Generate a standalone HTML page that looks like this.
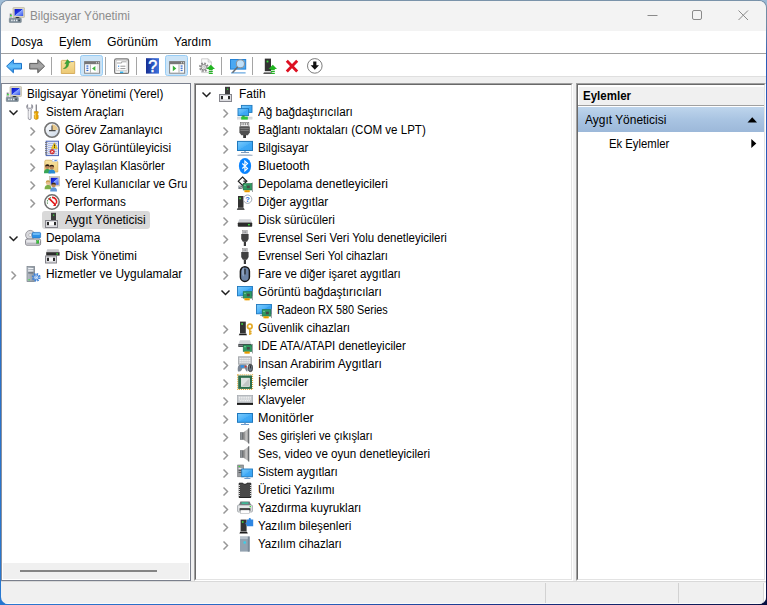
<!DOCTYPE html><html lang="tr"><head><meta charset="utf-8"><title>Bilgisayar Yönetimi</title><style>
html,body{margin:0;padding:0;}
body{width:767px;height:605px;overflow:hidden;position:relative;font-family:"Liberation Sans",sans-serif;font-size:12px;color:#000;background:#2a64c0;}
.cn{position:absolute;width:12px;height:12px;}
#frame{position:absolute;left:0;top:0;width:767px;height:605px;border-radius:8px;
 background:
  linear-gradient(180deg,#7a90a8 0px,#7d93ad 30px,#7a90ac 230px,#2a70c8 320px,#2878d0 605px) left top/9px 100% no-repeat,
  linear-gradient(180deg,#758ea6 0px,#6f8aa5 24px,#2a5cb8 60px,#2858b8 260px,#0a1850 520px,#060e40 605px) right top/9px 100% no-repeat,
  linear-gradient(90deg,#7a93aa,#7a93aa) left top/100% 9px no-repeat,
  linear-gradient(90deg,#2a78d0 0%,#2a64c0 40%,#1a3488 65%,#0a1248 100%) left bottom/100% 9px no-repeat;}
#win{position:absolute;left:1px;top:1px;width:765px;height:603px;background:#f0f0f0;border-radius:7px;overflow:hidden;}
#win>*{position:absolute;}
#title{left:0;top:0;width:765px;height:30px;background:#f3f3f3;}
#menu{left:0;top:30px;width:765px;height:22px;background:#fff;}
#msep{left:0;top:52px;width:765px;height:1px;background:#a0a0a0;}
#tool{left:0;top:53px;width:765px;height:22px;background:#fff;}
#tsep{left:0;top:75px;width:765px;height:1px;background:#dfdfdf;}
.pane{background:#fff;box-sizing:border-box;}
.tx{position:absolute;white-space:nowrap;line-height:18px;height:18px;transform-origin:0 50%;}
.ic{position:absolute;width:16px;height:16px;overflow:visible;}
.abs{position:absolute;}
</style></head><body>
<svg width="0" height="0" style="position:absolute"><defs>
<linearGradient id="gScr" x1="0" y1="0" x2="1" y2="1"><stop offset="0" stop-color="#0a10c8"/><stop offset=".45" stop-color="#2038e0"/><stop offset=".5" stop-color="#8fa8ff"/><stop offset="1" stop-color="#3050e8"/></linearGradient>
<linearGradient id="gBlue" x1="0" y1="0" x2="1" y2="1"><stop offset="0" stop-color="#7ccbfd"/><stop offset=".5" stop-color="#4db2f8"/><stop offset=".52" stop-color="#3fa9f6"/><stop offset="1" stop-color="#36a3f4"/></linearGradient>
<linearGradient id="gSpk" x1="0" y1="0" x2="1" y2="0"><stop offset="0" stop-color="#6e6e6e"/><stop offset=".5" stop-color="#c8c8c8"/><stop offset="1" stop-color="#8a8a8a"/></linearGradient>
<linearGradient id="gBack" x1="0" y1="0" x2="0" y2="1"><stop offset="0" stop-color="#2b8fe6"/><stop offset=".5" stop-color="#69c2fb"/><stop offset="1" stop-color="#1f86e2"/></linearGradient>
<linearGradient id="gFwd" x1="0" y1="0" x2="0" y2="1"><stop offset="0" stop-color="#8c8c8c"/><stop offset=".5" stop-color="#a8a8a8"/><stop offset="1" stop-color="#7e7e7e"/></linearGradient>
<linearGradient id="gHelp" x1="0" y1="0" x2="1" y2="0"><stop offset="0" stop-color="#162f92"/><stop offset=".55" stop-color="#2a55c4"/><stop offset="1" stop-color="#3f74dc"/></linearGradient>
<linearGradient id="gFold" x1="0" y1="0" x2="0" y2="1"><stop offset="0" stop-color="#f7e3a1"/><stop offset="1" stop-color="#ecc873"/></linearGradient>
<linearGradient id="gClock" x1="0" y1="0" x2="1" y2="1"><stop offset="0" stop-color="#ffffff"/><stop offset="1" stop-color="#c9d6e6"/></linearGradient>
<linearGradient id="gTower" x1="0" y1="0" x2="1" y2="0"><stop offset="0" stop-color="#b9c0c8"/><stop offset="1" stop-color="#8a949e"/></linearGradient>
</defs></svg>
<div class="cn" style="left:0;top:0;background:#9fbcd6"></div><div class="cn" style="right:0;top:0;background:#9bbad6"></div><div class="cn" style="left:0;bottom:0;background:#2677d0"></div><div class="cn" style="right:0;bottom:0;background:#060e40"></div>
<div id="frame"></div>
<div id="win">
<div id="title"></div>
<svg class="ic" style="left:8px;top:6px" viewBox="0 0 16 16"><rect x="4" y="0.5" width="11.5" height="10" rx="0.8" fill="#d9d5c1" stroke="#b5b09a" stroke-width=".6"/><rect x="5.6" y="2" width="8.6" height="7" fill="url(#gScr)"/><path d="M6 11.2c1-1.6 4-1.6 5 0z" fill="#222"/><rect x="0.3" y="6.5" width="2.6" height="4.6" fill="#c9c9cf"/><rect x="1" y="8" width="1.8" height="1.3" fill="#3fe03f"/><rect x="1.3" y="6.8" width="1" height="1" fill="#444"/><rect x="0.3" y="11.2" width="12" height="4.3" rx="0.6" fill="#7d8d99" stroke="#66757f" stroke-width=".5"/><rect x="2.2" y="12.6" width="1.4" height="1.6" fill="#e8ecef"/><rect x="4.6" y="12.6" width="1.4" height="1.6" fill="#e8ecef"/><rect x="7" y="12.6" width="1.4" height="1.6" fill="#e8ecef"/><rect x="9.4" y="12.6" width="1.4" height="1.6" fill="#39434b"/></svg>
<span class="tx" style="left:29.35px;top:6px;transform:scaleX(0.9811);color:#8c8c8c;">Bilgisayar Yönetimi</span>
<svg class="abs" style="left:0;top:0" width="765" height="30" viewBox="1 1 765 30" fill="none" stroke="#8a8a8a" stroke-width="1"><path d="M647.5 15.5h10"/><rect x="692.5" y="10.500" width="9" height="9" rx="1.500"/><path d="M738.500 10.500l9.500 9.500M748 10.500l-9.500 9.500"/></svg>
<div id="menu"></div>
<span class="tx" style="left:10.25px;top:32px;transform:scaleX(0.9319);">Dosya</span>
<span class="tx" style="left:58.05px;top:32px;transform:scaleX(0.9627);">Eylem</span>
<span class="tx" style="left:105.95px;top:32px;transform:scaleX(1.0174);">Görünüm</span>
<span class="tx" style="left:172.65px;top:32px;transform:scaleX(0.9816);">Yardım</span>
<div id="msep"></div><div id="tool"></div><div id="tsep"></div>
<svg class="abs" style="left:0;top:53px" width="340" height="23" viewBox="1 54 340 23"><g>
<!-- back arrow x6..22 y59..73 -->
<path d="M6.600 66.200L13.400 59.600V63.400H21.500V69H13.400V72.800z" fill="url(#gBack)" stroke="#1b73c9" stroke-width="1" stroke-linejoin="round"/>
<path d="M44.600 66.200L37.800 59.600V63.400H29.700V69H37.800V72.800z" fill="url(#gFwd)" stroke="#5c5c5c" stroke-width="1" stroke-linejoin="round"/>
<path d="M51.500 57v18M105.500 57v18M136.500 57v18M190.500 57v18M221.500 57v18M252.500 57v18" stroke="#a5a5a5" stroke-width="1"/>
<!-- folder up x61..75 y60..74 -->
<path d="M61.300 62.500V73.500H74.700V61.600H69.200L68 60.400H62.300C61.700 60.400 61.300 60.800 61.300 61.400z" fill="url(#gFold)" stroke="#cfa24a" stroke-width=".8"/>
<path d="M63.400 68.500c2.200-.6 3.200-2.600 3-5.200l-1.600.6 2.600-4.300 2.800 3-1.600.2c.4 3.600-1.800 6.200-5.200 5.700z" fill="#3aa63a" stroke="#1f7e1f" stroke-width=".4"/>
<rect x="70.600" y="61" width="3" height="1" fill="#5a86d8"/>
<!-- highlighted buttons -->
<rect x="80.500" y="55.500" width="22" height="20" rx="2" fill="#cce4f7" stroke="#98cdf5"/>
<rect x="165.500" y="55.500" width="22" height="20" rx="2" fill="#cce4f7" stroke="#98cdf5"/>
<!-- show tree icon x84..100 y61..73.5 -->
<g id="wicon">
<rect x="84.600" y="61.600" width="15" height="11.600" fill="#fff" stroke="#858585" stroke-width="1"/>
<rect x="84.600" y="61.600" width="15" height="2.600" fill="#777"/>
<rect x="96" y="62.300" width="1" height="1" fill="#e8e8e8"/><rect x="98" y="62.300" width="1" height="1" fill="#e8e8e8"/>
</g>
<path d="M90.400 64.500V72.600" stroke="#9a9a9a" stroke-width=".8"/>
<rect x="86.400" y="65.400" width="2" height="1.300" fill="#3a6fd0"/><rect x="86.400" y="67.600" width="2" height="1.300" fill="#3a6fd0"/><rect x="86.400" y="69.800" width="2" height="1.300" fill="#3a6fd0"/>
<path d="M95.400 66v5l-3.400-2.500z" fill="#3db53d"/>
<rect x="96.800" y="65" width="2" height="7.400" fill="#ececec"/>
<!-- second window icon -->
<rect x="169.600" y="61.600" width="15" height="11.600" fill="#fff" stroke="#858585" stroke-width="1"/>
<rect x="169.600" y="61.600" width="15" height="2.600" fill="#777"/>
<rect x="181" y="62.300" width="1" height="1" fill="#e8e8e8"/><rect x="183" y="62.300" width="1" height="1" fill="#e8e8e8"/>
<path d="M179 64.500V72.600" stroke="#9a9a9a" stroke-width=".8"/>
<rect x="180.600" y="65.400" width="2" height="1.300" fill="#3a6fd0"/><rect x="180.600" y="67.600" width="2" height="1.300" fill="#3a6fd0"/><rect x="180.600" y="69.800" width="2" height="1.300" fill="#3a6fd0"/>
<path d="M172.800 65.600v5.600l3.500-2.800z" fill="#35b035"/>
<!-- properties x114..129 y58.4..73.8 -->
<rect x="114.600" y="58.900" width="14" height="14.600" rx="1.600" fill="#f2f2f2" stroke="#7a7a7a" stroke-width="1.200"/>
<rect x="116.200" y="60.400" width="10.800" height="10" fill="#fff" stroke="#b5b5b5" stroke-width=".5"/>
<path d="M117 63h4.600v-1.200h4.800" stroke="#8f8f8f" stroke-width=".8" fill="none"/>
<rect x="118" y="65.600" width="1.200" height="1.200" fill="#3a8ee6"/><path d="M120.400 66.200h5M120.400 68.600h5" stroke="#8a8a8a" stroke-width=".9"/><rect x="118" y="68" width="1.200" height="1.200" fill="#bbb"/>
<rect x="120" y="71.600" width="3.400" height="1.300" fill="#1fa8e8"/><rect x="124.200" y="71.600" width="3" height="1.300" fill="#c9c9c9"/>
<circle cx="127.400" cy="59.800" r=".8" fill="#9a9a9a"/>
<!-- help x146..159 y58..73.8 -->
<rect x="146" y="58.200" width="13" height="15.400" fill="url(#gHelp)"/>
<text x="152.600" y="72" font-size="16" fill="#fff" stroke="#fff" stroke-width=".5" text-anchor="middle" font-family="Liberation Sans, sans-serif">?</text>
<!-- gear page x198.7..215 y58.4..74 -->
<path d="M201.600 58.800h6.600l3.200 3.200v10.600h-9.800z" fill="#fafafa" stroke="#c4c4c4" stroke-width=".8"/>
<path d="M208.200 58.800v3.200h3.200" fill="none" stroke="#c4c4c4" stroke-width=".8"/>
<circle cx="203.800" cy="67.200" r="3.700" fill="none" stroke="#8a8a8a" stroke-width="2.200" stroke-dasharray="1.600 1.300"/>
<circle cx="203.800" cy="67.200" r="2.700" fill="#f0f0f0" stroke="#8a8a8a" stroke-width="1"/><circle cx="203.800" cy="67.200" r="1.100" fill="#fff" stroke="#9a9a9a" stroke-width=".6"/>
<path d="M210.800 64.800l4.200 4.200h-2.200v1.200h-4v-1.200h-2.200z" fill="#22b422"/><rect x="208.800" y="71" width="4" height="1.100" fill="#22b422"/><rect x="208.800" y="72.900" width="4" height="1.100" fill="#22b422"/>
<!-- monitor magnifier x230..246 y59..73.4 -->
<rect x="230.500" y="59.500" width="15.200" height="9.600" fill="#4aa8f2" stroke="#2583d6" stroke-width="1"/>
<path d="M231 72.900h14.600" stroke="#6aa9e0" stroke-width="1.100"/>
<circle cx="240.400" cy="63.800" r="4.100" fill="#bfe0fa" stroke="#8e959c" stroke-width="1.100"/>
<path d="M237.600 67l-5.200 5.800" stroke="#666c72" stroke-width="1.500"/>
<!-- device update x264..276.6 y58.4..74 -->
<rect x="264.800" y="58.600" width="6.200" height="12.600" fill="#333"/><rect x="266.600" y="60.600" width="1.800" height="1.800" fill="#3de03d"/>
<path d="M264 72.400h8l.8 1.400h-9.600z" fill="#1e1e1e"/>
<path d="M272.800 64.800l4.200 4.200h-2.200v1.200h-4v-1.200h-2.200z" fill="#22b422"/><rect x="270.800" y="71" width="4" height="1.100" fill="#22b422"/><rect x="270.800" y="72.900" width="4" height="1.100" fill="#22b422"/>
<!-- red X x285.4..298.5 y59.6..72.5 -->
<path d="M286.800 60.800l10.400 10.600M297.200 60.800l-10.400 10.600" stroke="#dd1122" stroke-width="2.900" stroke-linecap="butt"/>
<!-- circle down arrow x307..322.5 y58..73.8 -->
<circle cx="314.800" cy="65.900" r="7.300" fill="#fff" stroke="#7d7d7d" stroke-width="1"/>
<path d="M313.200 61.600h3.200v3.600h2.600l-4.200 4.600-4.200-4.600h2.600z" fill="#111"/>
</g>
</svg>
<div class="pane" style="left:0px;top:82px;width:190px;height:498px;border:1px solid #7a7f8c;border-left-color:#8a8f9b"></div>
<div class="abs" style="left:2px;top:562px;width:186px;height:16px;background:#f0f0f0"></div>
<div class="abs" style="left:19px;top:569px;width:137px;height:2px;background:#858585"></div>
<div class="abs" style="left:41px;top:210px;width:108px;height:18px;background:#d9d9d9;border-radius:3px"></div>
<svg class="ic" style="left:5px;top:85px" viewBox="0 0 16 16"><rect x="4" y="0.5" width="11.5" height="10" rx="0.8" fill="#d9d5c1" stroke="#b5b09a" stroke-width=".6"/><rect x="5.6" y="2" width="8.6" height="7" fill="url(#gScr)"/><path d="M6 11.2c1-1.6 4-1.6 5 0z" fill="#222"/><rect x="0.3" y="6.5" width="2.6" height="4.6" fill="#c9c9cf"/><rect x="1" y="8" width="1.8" height="1.3" fill="#3fe03f"/><rect x="1.3" y="6.8" width="1" height="1" fill="#444"/><rect x="0.3" y="11.2" width="12" height="4.3" rx="0.6" fill="#7d8d99" stroke="#66757f" stroke-width=".5"/><rect x="2.2" y="12.6" width="1.4" height="1.6" fill="#e8ecef"/><rect x="4.6" y="12.6" width="1.4" height="1.6" fill="#e8ecef"/><rect x="7" y="12.6" width="1.4" height="1.6" fill="#e8ecef"/><rect x="9.4" y="12.6" width="1.4" height="1.6" fill="#39434b"/></svg>
<span class="tx" style="left:25.65px;top:84px;transform:scaleX(0.9731);">Bilgisayar Yönetimi (Yerel)</span>
<svg class="ic" style="left:24px;top:103px" viewBox="0 0 16 16"><path d="M2.600 0.600C1.200 1.800 1.400 4.600 3.300 5.600V14.300c0 1.700 2.800 1.700 2.800 0V5.600C8 4.600 8.200 1.800 6.800 0.600V3.400L5.800 4.200H3.600L2.600 3.400z" fill="#ececf0" stroke="#85858e" stroke-width=".9" stroke-linejoin="round"/><path d="M4 7v6.600" stroke="#fff" stroke-width=".8"/><rect x="10.700" y="0.500" width="1.100" height="7.600" fill="#6c6c74"/><path d="M9.300 7.600h3.900v1.600l-.6.500v1l.6.600v3c0 1.500-3.900 1.500-3.900 0v-3l.6-.6v-1l-.6-.5z" fill="#eaa500" stroke="#b67c00" stroke-width=".5"/><path d="M10.400 9v5.600" stroke="#ffd45a" stroke-width=".8"/></svg>
<span class="tx" style="left:44.65px;top:102px;transform:scaleX(0.9702);">Sistem Araçları</span>
<svg class="ic" style="left:43px;top:121px" viewBox="0 0 16 16"><circle cx="8" cy="8" r="7.200" fill="url(#gClock)" stroke="#747474" stroke-width="1.600"/><path d="M8 8V2.2A5.8 5.8 0 0 1 13.8 8z" fill="#e9c98a"/><path d="M8 3.400V8.600M5 8.600h6.600" fill="none" stroke="#4a4a4a" stroke-width="1.100"/></svg>
<span class="tx" style="left:64.15px;top:120px;transform:scaleX(0.9647);">Görev Zamanlayıcı</span>
<svg class="ic" style="left:43px;top:139px" viewBox="0 0 16 16"><rect x="2.200" y="1.200" width="12.300" height="14.400" fill="#dfe5f6" stroke="#4a63b8" stroke-width="1"/><path d="M4 3.5h9M4 5.5h9M4 7.5h9M4 9.5h9M4 11.5h9M4 13.5h9" stroke="#9aa9dc" stroke-width=".7"/><path d="M1 2.5h2.4M1 4.5h2.4M1 6.5h2.4M1 8.5h2.4M1 10.5h2.4M1 12.5h2.4M1 14h2.4" stroke="#777" stroke-width=".9"/><path d="M10.400 2.800l3 5.600H7.400z" fill="#f8d21c" stroke="#c79a00" stroke-width=".5"/><rect x="10" y="4.600" width=".9" height="2" fill="#222"/><rect x="10" y="7" width=".9" height=".8" fill="#222"/><circle cx="8.200" cy="11.700" r="2.300" fill="#e02828" stroke="#b01a1a" stroke-width=".5"/><path d="M7.200 10.700l2 2M9.200 10.700l-2 2" stroke="#fff" stroke-width=".9"/></svg>
<span class="tx" style="left:64.15px;top:138px;transform:scaleX(0.9937);">Olay Görüntüleyicisi</span>
<svg class="ic" style="left:43px;top:157px" viewBox="0 0 16 16"><path d="M0.800 4.200V14H13.800V3.600H8.400L7.200 2.200H1.800C1.200 2.200 .800 2.700 .800 3.200z" fill="url(#gFold)" stroke="#d3a94f" stroke-width=".7"/><rect x="8.600" y="1.600" width="4.600" height="2" fill="#fff" stroke="#b9c8e6" stroke-width=".5"/><rect x="10.400" y="2.100" width="2.400" height=".9" fill="#3a78e0"/><path d="M0.0 15.200000000000001c0-3.4 1.6-4.2 3.4-4.2s3.4.8 3.4 4.2z" fill="#37a657"/><circle cx="3.4" cy="8.8" r="2.2" fill="#b98558"/><path d="M1.1 8.600000000000001a2.3 2.3 0 0 1 4.6 0c-1.4-.9-3.2-.9-4.6 0z" fill="#2a1c12"/><path d="M4.4 15.6c0-3.4 1.6-4.2 3.4-4.2s3.4.8 3.4 4.2z" fill="#2a8ad2"/><circle cx="7.8" cy="9.2" r="2.2" fill="#b98558"/><path d="M5.5 9.0a2.3 2.3 0 0 1 4.6 0c-1.4-.9-3.2-.9-4.6 0z" fill="#2a1c12"/></svg>
<span class="tx" style="left:64.15px;top:156px;transform:scaleX(0.9410);">Paylaşılan Klasörler</span>
<svg class="ic" style="left:43px;top:175px" viewBox="0 0 16 16"><rect x="5.6" y="0.6" width="10" height="9.4" fill="#d9d5c1" stroke="#b8b39d" stroke-width=".6"/><rect x="6.8" y="1.8" width="7.8" height="7" fill="url(#gScr)"/><path d="M0.6000000000000001 13.2c0-3.4 1.6-4.2 3.4-4.2s3.4.8 3.4 4.2z" fill="#7cae48"/><circle cx="4" cy="6.8" r="2.2" fill="#e8bf90"/><path d="M1.7000000000000002 6.6a2.3 2.3 0 0 1 4.6 0c-1.4-.9-3.2-.9-4.6 0z" fill="#c9a050"/><path d="M6.199999999999999 15.4c0-3.4 1.6-4.2 3.4-4.2s3.4.8 3.4 4.2z" fill="#5f96d6"/><circle cx="9.6" cy="9" r="2.2" fill="#c08a58"/><path d="M7.3 8.8a2.3 2.3 0 0 1 4.6 0c-1.4-.9-3.2-.9-4.6 0z" fill="#3b2a1a"/></svg>
<span class="tx" style="left:64.15px;top:174px;transform:scaleX(0.9484);">Yerel Kullanıcılar ve Gru</span>
<svg class="ic" style="left:43px;top:193px" viewBox="0 0 16 16"><circle cx="8" cy="8" r="7.2" fill="#fdfdfd" stroke="#6e6e6e" stroke-width="1.5"/><path d="M3.6 9.6A4.6 4.6 0 0 1 8 3.4" fill="none" stroke="#4a8c4a" stroke-width="1.1" stroke-dasharray="1.2 1"/><path d="M8 3.4A4.6 4.6 0 0 1 12.4 9.6" fill="none" stroke="#e02020" stroke-width="1.6"/><path d="M5 4.4L11.6 11" stroke="#e01818" stroke-width="1.7"/><path d="M11.8 8.6V12H9z" fill="#e01818"/></svg>
<span class="tx" style="left:64.15px;top:192px;transform:scaleX(0.9802);">Performans</span>
<svg class="ic" style="left:43px;top:211px" viewBox="0 0 16 16"><rect x="7" y="0.8" width="5" height="7.6" fill="#3c3c3c"/><rect x="9" y="2.6" width="1.2" height="1.2" fill="#35e035"/><rect x="1.5" y="8.5" width="12" height="7" fill="#dcdce0" stroke="#85858c" stroke-width="1"/><rect x="5" y="10" width="5" height="3.2" fill="#fafafa"/><rect x="3" y="10" width="2" height="3.2" fill="#2a2a2a"/><rect x="10" y="10" width="2" height="3.2" fill="#2a2a2a"/></svg>
<span class="tx" style="left:64.15px;top:210px;transform:scaleX(0.9876);">Aygıt Yöneticisi</span>
<svg class="ic" style="left:24px;top:229px" viewBox="0 0 16 16"><circle cx="5.2" cy="5" r="4.6" fill="#d8d8dc" stroke="#8c8c92" stroke-width=".8"/><circle cx="5.2" cy="5" r="1.5" fill="#fff" stroke="#9a9aa0" stroke-width=".6"/><rect x="7.2" y="2.4" width="8.4" height="5.6" rx="1" fill="#2f92e6" stroke="#1a6cc0" stroke-width=".6"/><rect x="8" y="3.2" width="6.8" height="1.6" fill="#7cc4fb"/><rect x="0.6" y="9" width="15" height="6.2" rx="1.4" fill="#e6e6ea" stroke="#77777f" stroke-width=".9"/><rect x="1.4" y="12.6" width="13.4" height="2" fill="#b9b9c0"/><rect x="11.6" y="10.6" width="2.2" height="2.6" fill="#38c838" stroke="#1f8a1f" stroke-width=".4"/></svg>
<span class="tx" style="left:44.65px;top:228px;transform:scaleX(0.9926);">Depolama</span>
<svg class="ic" style="left:43px;top:247px" viewBox="0 0 16 16"><path d="M3.2 1.2h11.4l1 3.2H2.2z" fill="#c9c9cd"/><rect x="2.2" y="4.2" width="13.4" height="3.4" fill="#2e2e2e"/><rect x="12.4" y="5.2" width="1.5" height="1.4" fill="#3de03d"/><rect x="1.5" y="8" width="11" height="7" fill="#dcdce0" stroke="#85858c" stroke-width="1"/><rect x="5" y="9.8" width="4" height="3.2" fill="#fafafa"/><rect x="3" y="9.8" width="2" height="3.2" fill="#2a2a2a"/><rect x="9" y="9.8" width="2" height="3.2" fill="#2a2a2a"/></svg>
<span class="tx" style="left:64.15px;top:246px;transform:scaleX(0.9817);">Disk Yönetimi</span>
<svg class="ic" style="left:24px;top:265px" viewBox="0 0 16 16"><rect x="2" y="0.6" width="7.6" height="15" fill="url(#gTower)" stroke="#747d86" stroke-width=".7"/><rect x="3.2" y="2" width="5.2" height="1.2" fill="#eef1f4"/><rect x="3.2" y="4.2" width="5.2" height="1.2" fill="#eef1f4"/><rect x="3.2" y="6.4" width="5.2" height="1" fill="#59636c"/><rect x="3.4" y="13.2" width="1.4" height="1.2" fill="#3de03d"/><circle cx="11.2" cy="11.4" r="3.4" fill="none" stroke="#3f82d8" stroke-width="2" stroke-dasharray="1.5 1.17"/><circle cx="11.2" cy="11.4" r="2.5" fill="#d5e6fa" stroke="#3f82d8" stroke-width="1"/><circle cx="11.2" cy="11.4" r="1" fill="#fff" stroke="#3f82d8" stroke-width=".5"/></svg>
<span class="tx" style="left:44.65px;top:264px;transform:scaleX(0.9922);">Hizmetler ve Uygulamalar</span>
<div class="pane" style="left:193px;top:82px;width:379px;height:498px;border-top:1px solid #a0a0a0;border-left:1px solid #a0a0a0;border-right:1px solid #fff;border-bottom:1px solid #fff"><div style="position:absolute;left:0;top:0;right:0;bottom:0;border-top:1px solid #696969;border-left:1px solid #696969;border-right:1px solid #e3e3e3;border-bottom:1px solid #e3e3e3"></div></div>
<svg class="ic" style="left:217px;top:85px" viewBox="0 0 16 16"><rect x="7" y="0.8" width="5" height="7.6" fill="#3c3c3c"/><rect x="9" y="2.6" width="1.2" height="1.2" fill="#35e035"/><rect x="1.5" y="8.5" width="12" height="7" fill="#dcdce0" stroke="#85858c" stroke-width="1"/><rect x="5" y="10" width="5" height="3.2" fill="#fafafa"/><rect x="3" y="10" width="2" height="3.2" fill="#2a2a2a"/><rect x="10" y="10" width="2" height="3.2" fill="#2a2a2a"/></svg>
<span class="tx" style="left:237.65px;top:84px;transform:scaleX(0.9967);">Fatih</span>
<svg class="ic" style="left:236px;top:103px" viewBox="0 0 16 16"><rect x="4.4" y="1.4" width="10.6" height="7" fill="url(#gBlue)" stroke="#1f78bd" stroke-width=".9"/><rect x="1" y="4.6" width="10.6" height="7" fill="url(#gBlue)" stroke="#1f78bd" stroke-width=".9"/><rect x="5.2" y="11.6" width="2.4" height="1.4" fill="#2a8a2a"/><rect x="0" y="12.8" width="15.4" height="2.6" fill="#c8ccd0"/><rect x="4.2" y="12.6" width="6.6" height="3" fill="#2fc43a"/><path d="M0 14.1h4M11 14.1h4.4" stroke="#f4f4f4" stroke-width=".7"/></svg>
<span class="tx" style="left:256.95px;top:102px;transform:scaleX(0.9734);">Ağ bağdaştırıcıları</span>
<svg class="ic" style="left:236px;top:121px" viewBox="0 0 16 16"><rect x="3.4" y="0.6" width="8.4" height="4" fill="#f4f4f4" stroke="#777" stroke-width=".7"/><path d="M5 1v2.2M6.8 1v2.2M8.6 1v2.2M10.4 1v2.2" stroke="#555" stroke-width=".7"/><path d="M2.4 4.4h10.4v6.2l-2 2.6H4.4l-2-2.6z" fill="#505050"/><path d="M3.4 6.4h8.4M3.4 8.4h8.4" stroke="#8a8a8a" stroke-width=".8"/><rect x="6.2" y="13" width="2.8" height="3" fill="#3a3a3a"/></svg>
<span class="tx" style="left:257.15px;top:120px;transform:scaleX(0.9639);">Bağlantı noktaları (COM ve LPT)</span>
<svg class="ic" style="left:236px;top:139px" viewBox="0 0 16 16"><rect x="0.500" y="1.400" width="15" height="9.100" fill="url(#gBlue)" stroke="#1f78bd" stroke-width="1"/><rect x="7" y="11" width="2" height="1" fill="#9fb8d0"/><rect x="4" y="12" width="8" height="1" fill="#7d9bbd"/><path d="M0.500 14.800c2-.5 13-.5 15 0v.900h-15z" fill="#8fa3bd"/></svg>
<span class="tx" style="left:257.15px;top:138px;transform:scaleX(0.9667);">Bilgisayar</span>
<svg class="ic" style="left:236px;top:157px" viewBox="0 0 16 16"><ellipse cx="8" cy="8" rx="6.1" ry="8" fill="#0a84ff"/><path d="M5.300 5.500l5.200 4.900-2.600 2.500V3.100l2.600 2.500-5.200 4.900" fill="none" stroke="#fff" stroke-width="1.150" stroke-linejoin="miter"/></svg>
<span class="tx" style="left:257.15px;top:156px;transform:scaleX(1.0164);">Bluetooth</span>
<svg class="ic" style="left:236px;top:175px" viewBox="0 0 16 16"><path d="M5.500 1l4.200 4.200-4.200 4.200-4.200-4.200z" fill="#fff" stroke="#222" stroke-width="1.200"/><path d="M6.400 5.200h3.800" stroke="#222" stroke-width="1.200"/><rect x="1.400" y="9.600" width="5" height="3.400" fill="#767c82"/><path d="M1.400 9.600l5 3.400" stroke="#d8dadc" stroke-width=".8"/><rect x="6.2" y="7.6" width="8.6" height="6.4" fill="#2f9a62" stroke="#1d6e42" stroke-width=".6"/><rect x="9.8" y="9.6" width="3" height="2.6" fill="#454a48"/><rect x="7.4" y="8.799999999999999" width="1.2" height="1" fill="#9fe0b8"/><rect x="7.4" y="14.2" width="5.4" height="2" fill="#f2a800"/><path d="M9.2 14.2v2M11.0 14.2v2" stroke="#c87800" stroke-width=".5"/><rect x="15.0" y="6.6" width=".8" height="9.4" fill="#8a8f94"/></svg>
<span class="tx" style="left:257.15px;top:174px;transform:scaleX(0.9929);">Depolama denetleyicileri</span>
<svg class="ic" style="left:236px;top:193px" viewBox="0 0 16 16"><rect x="1" y="2" width="5.5" height="11.8" fill="#333"/><rect x="2.3" y="3.6" width="1.6" height="1.6" fill="#3de03d"/><path d="M0.6 14.200000000000001h6.3l.8 1.6h-7.9z" fill="#1e1e1e"/><circle cx="10.600" cy="5.200" r="4.200" fill="#fff" stroke="#9aa2ac" stroke-width=".9"/><text x="10.600" y="7.900" font-size="7.500" font-weight="bold" fill="#2a6fd6" text-anchor="middle" font-family="Liberation Sans, sans-serif">?</text></svg>
<span class="tx" style="left:257.15px;top:192px;transform:scaleX(0.9849);">Diğer aygıtlar</span>
<svg class="ic" style="left:236px;top:211px" viewBox="0 0 16 16"><path d="M2.4 7.2h11.2l1.6 3.4H.8z" fill="#cfd2d6"/><rect x="0.8" y="10.4" width="14.4" height="4.4" rx=".8" fill="#2c2c2c"/><rect x="11" y="12" width="1.8" height="1.4" fill="#3de03d"/></svg>
<span class="tx" style="left:257.15px;top:210px;transform:scaleX(0.9760);">Disk sürücüleri</span>
<svg class="ic" style="left:236px;top:229px" viewBox="0 0 16 16"><rect x="5.6" y="0.6" width="4.6" height="3.6" fill="#c9c9cc" stroke="#8a8a8a" stroke-width=".5"/><rect x="6.6" y="1.6" width=".9" height="1" fill="#555"/><rect x="8.3" y="1.6" width=".9" height="1" fill="#555"/><path d="M4.2 4h7.4v5l-1.6 2.8H5.8L4.2 9z" fill="#404040"/><rect x="6.8" y="11.6" width="2.2" height="4.4" fill="#3a3a3a"/></svg>
<span class="tx" style="left:257.15px;top:228px;transform:scaleX(0.9562);">Evrensel Seri Veri Yolu denetleyicileri</span>
<svg class="ic" style="left:236px;top:247px" viewBox="0 0 16 16"><rect x="5.6" y="0.6" width="4.6" height="3.6" fill="#c9c9cc" stroke="#8a8a8a" stroke-width=".5"/><rect x="6.6" y="1.6" width=".9" height="1" fill="#555"/><rect x="8.3" y="1.6" width=".9" height="1" fill="#555"/><path d="M4.2 4h7.4v5l-1.6 2.8H5.8L4.2 9z" fill="#404040"/><rect x="6.8" y="11.6" width="2.2" height="4.4" fill="#3a3a3a"/></svg>
<span class="tx" style="left:257.15px;top:246px;transform:scaleX(0.9355);">Evrensel Seri Yol cihazları</span>
<svg class="ic" style="left:236px;top:265px" viewBox="0 0 16 16"><rect x="3.4" y="0.8" width="9" height="14.6" rx="4.500" fill="#6c84a6" stroke="#161616" stroke-width="1.500"/><path d="M5 4c0-1.4 1-2.2 2-2.4v9c-1.4-.6-2-2-2-3.4z" fill="#93a9c6" opacity=".8"/><rect x="7.4" y="2.6" width="1.2" height="6" rx=".6" fill="#1e1e1e"/></svg>
<span class="tx" style="left:257.15px;top:264px;transform:scaleX(0.9558);">Fare ve diğer işaret aygıtları</span>
<svg class="ic" style="left:236px;top:283px" viewBox="0 0 16 16"><rect x="0.5" y="2.5" width="15" height="9.3" fill="url(#gBlue)" stroke="#1f78bd" stroke-width=".9"/><path d="M1 11.400L15 3v8.400z" fill="#2d92e8" opacity=".35"/><path d="M4 13.500h2.400" stroke="#7d8aa0" stroke-width=".7"/><rect x="6.2" y="7.7" width="8.6" height="6.4" fill="#2f9a62" stroke="#1d6e42" stroke-width=".6"/><rect x="9.8" y="9.7" width="3" height="2.6" fill="#454a48"/><rect x="7.4" y="8.9" width="1.2" height="1" fill="#9fe0b8"/><rect x="7.4" y="14.3" width="5.4" height="2" fill="#f2a800"/><path d="M9.2 14.3v2M11.0 14.3v2" stroke="#c87800" stroke-width=".5"/><rect x="15.0" y="6.7" width=".8" height="9.4" fill="#8a8f94"/></svg>
<span class="tx" style="left:257.15px;top:282px;transform:scaleX(0.9819);">Görüntü bağdaştırıcıları</span>
<svg class="ic" style="left:255px;top:301px" viewBox="0 0 16 16"><rect x="0.5" y="2.5" width="15" height="9.3" fill="url(#gBlue)" stroke="#1f78bd" stroke-width=".9"/><path d="M1 11.400L15 3v8.400z" fill="#2d92e8" opacity=".35"/><path d="M4 13.500h2.400" stroke="#7d8aa0" stroke-width=".7"/><rect x="6.2" y="7.7" width="8.6" height="6.4" fill="#2f9a62" stroke="#1d6e42" stroke-width=".6"/><rect x="9.8" y="9.7" width="3" height="2.6" fill="#454a48"/><rect x="7.4" y="8.9" width="1.2" height="1" fill="#9fe0b8"/><rect x="7.4" y="14.3" width="5.4" height="2" fill="#f2a800"/><path d="M9.2 14.3v2M11.0 14.3v2" stroke="#c87800" stroke-width=".5"/><rect x="15.0" y="6.7" width=".8" height="9.4" fill="#8a8f94"/></svg>
<span class="tx" style="left:276.15px;top:300px;transform:scaleX(0.9026);">Radeon RX 580 Series</span>
<svg class="ic" style="left:236px;top:319px" viewBox="0 0 16 16"><rect x="3" y="1.6" width="5.8" height="11.6" fill="#333"/><rect x="4.3" y="3.2" width="1.6" height="1.6" fill="#3de03d"/><path d="M2.6 13.6h6.6l.8 1.6h-8.2z" fill="#1e1e1e"/><circle cx="12.800" cy="6.400" r="2.300" fill="none" stroke="#e3aa28" stroke-width="1.700"/><path d="M12.800 8.800v6.200M12.800 11.400h1.800M12.800 13.400h1.800" stroke="#e3aa28" stroke-width="1.500"/></svg>
<span class="tx" style="left:257.15px;top:318px;transform:scaleX(0.9718);">Güvenlik cihazları</span>
<svg class="ic" style="left:236px;top:337px" viewBox="0 0 16 16"><path d="M3 2.200h10l1.400 3.800H1.400z" fill="#d3d6d9"/><rect x="1.300" y="6" width="13.200" height="3" fill="#4a4e52"/><path d="M2 7.500h4" stroke="#9a9ea2" stroke-width=".6"/><rect x="6.2" y="7" width="8.6" height="6.4" fill="#2f9a62" stroke="#1d6e42" stroke-width=".6"/><rect x="9.8" y="9" width="3" height="2.6" fill="#454a48"/><rect x="7.4" y="8.2" width="1.2" height="1" fill="#9fe0b8"/><rect x="7.4" y="13.6" width="5.4" height="2" fill="#f2a800"/><path d="M9.2 13.6v2M11.0 13.6v2" stroke="#c87800" stroke-width=".5"/><rect x="15.0" y="6" width=".8" height="9.4" fill="#8a8f94"/></svg>
<span class="tx" style="left:257.15px;top:336px;transform:scaleX(0.9607);">IDE ATA/ATAPI denetleyiciler</span>
<svg class="ic" style="left:236px;top:355px" viewBox="0 0 16 16"><rect x="1.4" y="0.8" width="13" height="7.4" fill="#c4c7cb" stroke="#8e9196" stroke-width=".6"/><path d="M2.6 2.6h10.6M2.6 4.4h10.6M2.6 6.2h10.6" stroke="#f5f5f5" stroke-width="1" stroke-dasharray="1.3 .6"/><path d="M1 15.4c-.8-3 .2-6.6 2-6.8h5.4c1.8.2 2.8 3.8 2 6.8-1 .8-1.800-1.400-2.400-2.800H5.400c-.600 1.400-1.400 3.600-4.400 2.800z" fill="#7d8794"/><rect x="3.6" y="9.2" width="3.200" height="2.400" fill="#2f8fe8"/><circle cx="8.6" cy="10.600" r=".9" fill="#e03030"/><rect x="11.4" y="8.4" width="4" height="7.200" rx="2" fill="#6d7885" stroke="#2a2a2a" stroke-width=".8"/><rect x="13" y="9.4" width=".8" height="3" fill="#222"/></svg>
<span class="tx" style="left:257.15px;top:354px;transform:scaleX(1.0051);">İnsan Arabirim Aygıtları</span>
<svg class="ic" style="left:236px;top:373px" viewBox="0 0 16 16"><rect x="0.700" y="0.900" width="14.800" height="14.600" fill="none" stroke="#e0a838" stroke-width="1.200" stroke-dasharray="1 1"/><rect x="1.200" y="1.500" width="13.800" height="13.400" fill="#2e6e4c"/><rect x="4.400" y="4.200" width="8" height="8.200" fill="#dfe2e2" stroke="#f6f6f6" stroke-width=".7"/><path d="M4.800 12.200h7.400v-7.600z" fill="#c2c6c6"/></svg>
<span class="tx" style="left:257.15px;top:372px;transform:scaleX(0.9927);">İşlemciler</span>
<svg class="ic" style="left:236px;top:391px" viewBox="0 0 16 16"><rect x="0.300" y="3.300" width="15.400" height="8" fill="#c4c8cc" stroke="#9ea3a8" stroke-width=".6"/><path d="M1.800 5.200h12.400M1.800 7h12.400M2.600 8.800h10.800" stroke="#fafafa" stroke-width="1.100" stroke-dasharray="1.300 .5"/><rect x="0" y="10.900" width="16" height="2" fill="#1a1a1a"/></svg>
<span class="tx" style="left:257.15px;top:390px;transform:scaleX(0.9583);">Klavyeler</span>
<svg class="ic" style="left:236px;top:409px" viewBox="0 0 16 16"><rect x="0.500" y="3.500" width="15" height="8.800" fill="url(#gBlue)" stroke="#1f78bd" stroke-width="1"/><rect x="7" y="12.900" width="2" height="1.100" fill="#8fb4d8"/><rect x="4" y="14" width="8" height="1" fill="#6f9ccc"/></svg>
<span class="tx" style="left:257.15px;top:408px;transform:scaleX(1.0457);">Monitörler</span>
<svg class="ic" style="left:236px;top:427px" viewBox="0 0 16 16"><rect x="3" y="4.200" width="3.400" height="7.600" fill="#6f7377"/><rect x="3.600" y="4.200" width="1.200" height="7.600" fill="#9a9ea2"/><path d="M6.200 4.400L12 0.200v15.400L6.200 11.600z" fill="url(#gSpk)"/><path d="M11.800 0.200v15.400" stroke="#55595d" stroke-width=".9"/></svg>
<span class="tx" style="left:257.15px;top:426px;transform:scaleX(0.9336);">Ses girişleri ve çıkışları</span>
<svg class="ic" style="left:236px;top:445px" viewBox="0 0 16 16"><rect x="3" y="4.200" width="3.400" height="7.600" fill="#6f7377"/><rect x="3.600" y="4.200" width="1.200" height="7.600" fill="#9a9ea2"/><path d="M6.200 4.400L12 0.200v15.400L6.200 11.600z" fill="url(#gSpk)"/><path d="M11.800 0.200v15.400" stroke="#55595d" stroke-width=".9"/></svg>
<span class="tx" style="left:257.15px;top:444px;transform:scaleX(0.9696);">Ses, video ve oyun denetleyicileri</span>
<svg class="ic" style="left:236px;top:463px" viewBox="0 0 16 16"><rect x="0.700" y="1" width="5.800" height="11.800" fill="#9a9da0" stroke="#6a6e72" stroke-width=".6"/><rect x="1.600" y="2" width="1.600" height="1" fill="#3de03d"/><rect x="1.600" y="4" width="4" height="1" fill="#e6e8ea"/><rect x="1.600" y="6" width="4" height="1" fill="#55595d"/><rect x="1.600" y="8" width="4" height="1" fill="#55595d"/><rect x="4.7" y="5" width="10.8" height="7.8" fill="url(#gBlue)" stroke="#1f78bd" stroke-width=".9"/><rect x="9.400" y="13" width="2" height="1" fill="#8fb4d8"/><rect x="7.400" y="14" width="6" height="1" fill="#6f9ccc"/></svg>
<span class="tx" style="left:257.15px;top:462px;transform:scaleX(0.9649);">Sistem aygıtları</span>
<svg class="ic" style="left:236px;top:481px" viewBox="0 0 16 16"><path d="M2.200 1.200h3.600c.400 1.500 3.800 1.500 4.200 0h3.800v14.300H2.200z" fill="#484848" stroke="#161616" stroke-width=".9"/><path d="M1.400 3.500h1.600M1.400 5.500h1.600M1.400 7.500h1.600M1.400 9.500h1.600M1.400 11.500h1.600M1.400 13.500h1.600M13 3.500h1.600M13 5.500h1.600M13 7.500h1.600M13 9.500h1.600M13 11.500h1.600M13 13.500h1.600" stroke="#e8e8e8" stroke-width=".9"/></svg>
<span class="tx" style="left:257.15px;top:480px;transform:scaleX(0.9651);">Üretici Yazılımı</span>
<svg class="ic" style="left:236px;top:499px" viewBox="0 0 16 16"><path d="M3.400 1.400h9.200l1.400 3.600H2z" fill="#6b7075"/><rect x="4.600" y="2.400" width="6.800" height="1.400" fill="#35c9a0"/><rect x="0.600" y="5" width="14.800" height="7" rx="1" fill="#e4e6e8" stroke="#8a8f94" stroke-width=".7"/><rect x="12.600" y="6" width="1.400" height="1.200" fill="#3de03d"/><rect x="2.600" y="8.200" width="10.800" height="2.600" fill="#2a2a2a"/><rect x="3.600" y="10" width="8.800" height="3.600" fill="#fdfdfd" stroke="#a0a4a8" stroke-width=".5"/></svg>
<span class="tx" style="left:256.65px;top:498px;transform:scaleX(0.9763);">Yazdırma kuyrukları</span>
<svg class="ic" style="left:236px;top:517px" viewBox="0 0 16 16"><rect x="3.6" y="1.6" width="6" height="11.8" fill="#333"/><rect x="4.9" y="3.2" width="1.6" height="1.6" fill="#3de03d"/><path d="M3.2 13.8h6.8l.8 1.6h-8.4z" fill="#1e1e1e"/><path d="M9.900 1.600h1.900c-.6-2 2.600-2 2 0H16.200v6.600H9.900V6.400c-1.900.6-1.900-2.500 0-1.900z" fill="#2f86e2"/></svg>
<span class="tx" style="left:256.65px;top:516px;transform:scaleX(0.9670);">Yazılım bileşenleri</span>
<svg class="ic" style="left:236px;top:535px" viewBox="0 0 16 16"><rect x="3" y="0.600" width="9.600" height="15" fill="#93a2b0"/><path d="M3 0.600h9.600v2.400H3z" fill="#b7c2cc"/><rect x="10.800" y="0.600" width="1.800" height="15" fill="#7a8896"/><rect x="6.600" y="5.400" width="2.200" height="2.200" fill="#2fd5f0"/></svg>
<span class="tx" style="left:256.65px;top:534px;transform:scaleX(0.9617);">Yazılım cihazları</span>
<svg class="abs" style="left:0;top:82px" width="260" height="480" viewBox="1 83 260 480"><path d="M9.5 110.5l4 4 4-4" fill="none" stroke="#1f1f1f" stroke-width="1.500"/><path d="M30.5 127.5l4 4-4 4" fill="none" stroke="#979797" stroke-width="1.450"/><path d="M30.5 145.5l4 4-4 4" fill="none" stroke="#979797" stroke-width="1.450"/><path d="M30.5 163.5l4 4-4 4" fill="none" stroke="#979797" stroke-width="1.450"/><path d="M30.5 181.5l4 4-4 4" fill="none" stroke="#979797" stroke-width="1.450"/><path d="M30.5 199.5l4 4-4 4" fill="none" stroke="#979797" stroke-width="1.450"/><path d="M9.5 236.5l4 4 4-4" fill="none" stroke="#1f1f1f" stroke-width="1.500"/><path d="M11.5 271.5l4 4-4 4" fill="none" stroke="#979797" stroke-width="1.450"/><path d="M202.5 92.5l4 4 4-4" fill="none" stroke="#1f1f1f" stroke-width="1.500"/><path d="M223.5 109.5l4 4-4 4" fill="none" stroke="#979797" stroke-width="1.450"/><path d="M223.5 127.5l4 4-4 4" fill="none" stroke="#979797" stroke-width="1.450"/><path d="M223.5 145.5l4 4-4 4" fill="none" stroke="#979797" stroke-width="1.450"/><path d="M223.5 163.5l4 4-4 4" fill="none" stroke="#979797" stroke-width="1.450"/><path d="M223.5 181.5l4 4-4 4" fill="none" stroke="#979797" stroke-width="1.450"/><path d="M223.5 199.5l4 4-4 4" fill="none" stroke="#979797" stroke-width="1.450"/><path d="M223.5 217.5l4 4-4 4" fill="none" stroke="#979797" stroke-width="1.450"/><path d="M223.5 235.5l4 4-4 4" fill="none" stroke="#979797" stroke-width="1.450"/><path d="M223.5 253.5l4 4-4 4" fill="none" stroke="#979797" stroke-width="1.450"/><path d="M223.5 271.5l4 4-4 4" fill="none" stroke="#979797" stroke-width="1.450"/><path d="M221.5 290.5l4 4 4-4" fill="none" stroke="#1f1f1f" stroke-width="1.500"/><path d="M223.5 325.5l4 4-4 4" fill="none" stroke="#979797" stroke-width="1.450"/><path d="M223.5 343.5l4 4-4 4" fill="none" stroke="#979797" stroke-width="1.450"/><path d="M223.5 361.5l4 4-4 4" fill="none" stroke="#979797" stroke-width="1.450"/><path d="M223.5 379.5l4 4-4 4" fill="none" stroke="#979797" stroke-width="1.450"/><path d="M223.5 397.5l4 4-4 4" fill="none" stroke="#979797" stroke-width="1.450"/><path d="M223.5 415.5l4 4-4 4" fill="none" stroke="#979797" stroke-width="1.450"/><path d="M223.5 433.5l4 4-4 4" fill="none" stroke="#979797" stroke-width="1.450"/><path d="M223.5 451.5l4 4-4 4" fill="none" stroke="#979797" stroke-width="1.450"/><path d="M223.5 469.5l4 4-4 4" fill="none" stroke="#979797" stroke-width="1.450"/><path d="M223.5 487.5l4 4-4 4" fill="none" stroke="#979797" stroke-width="1.450"/><path d="M223.5 505.5l4 4-4 4" fill="none" stroke="#979797" stroke-width="1.450"/><path d="M223.5 523.5l4 4-4 4" fill="none" stroke="#979797" stroke-width="1.450"/><path d="M223.5 541.5l4 4-4 4" fill="none" stroke="#979797" stroke-width="1.450"/></svg>
<div class="pane" style="left:575px;top:82px;width:190px;height:498px;border-top:1px solid #a0a0a0;border-left:1px solid #a0a0a0;border-right:1px solid #fff;border-bottom:1px solid #fff"><div style="position:absolute;left:0;top:0;right:0;bottom:0;border-top:1px solid #696969;border-left:1px solid #696969;border-right:1px solid #e3e3e3;border-bottom:1px solid #e3e3e3"></div></div>
<div class="abs" style="left:578px;top:86px;width:185px;height:18px;background:#f0f0f0"></div>
<div class="abs" style="left:577px;top:104px;width:186px;height:1px;background:#a0a0a0"></div>
<div class="abs" style="left:577px;top:106px;width:186px;height:25px;background:linear-gradient(180deg,#bed5ec 0%,#a9c4e2 50%,#9cb8d9 100%)"></div>
<span class="tx" style="left:581.90px;top:86px;transform:scaleX(0.9601);font-weight:bold;">Eylemler</span>
<span class="tx" style="left:583.65px;top:110px;transform:scaleX(0.9962);">Aygıt Yöneticisi</span>
<span class="tx" style="left:607.90px;top:133.5px;transform:scaleX(0.9420);">Ek Eylemler</span>
<svg class="abs" style="left:740px;top:110px" width="24" height="44" viewBox="741 111 24 44"><path d="M747.500 122.500h9.500l-4.750-5.200z" fill="#000"/><path d="M751.300 139v9l5-4.500z" fill="#000"/></svg>
<div class="abs" style="left:0;top:580px;width:765px;height:1px;background:#d9d9d9"></div>
<div class="abs" style="left:544px;top:582px;width:1px;height:20px;background:#d2d2d2"></div>
<div class="abs" style="left:677px;top:582px;width:1px;height:20px;background:#d2d2d2"></div>
<div class="abs" style="left:762px;top:582px;width:1px;height:20px;background:#d8d8d8"></div>
<div class="abs" style="left:763px;top:582px;width:2px;height:21px;background:#fff"></div>
<div class="abs" style="left:0;top:602px;width:765px;height:1px;background:#fafafa"></div>
</div>
</body></html>
